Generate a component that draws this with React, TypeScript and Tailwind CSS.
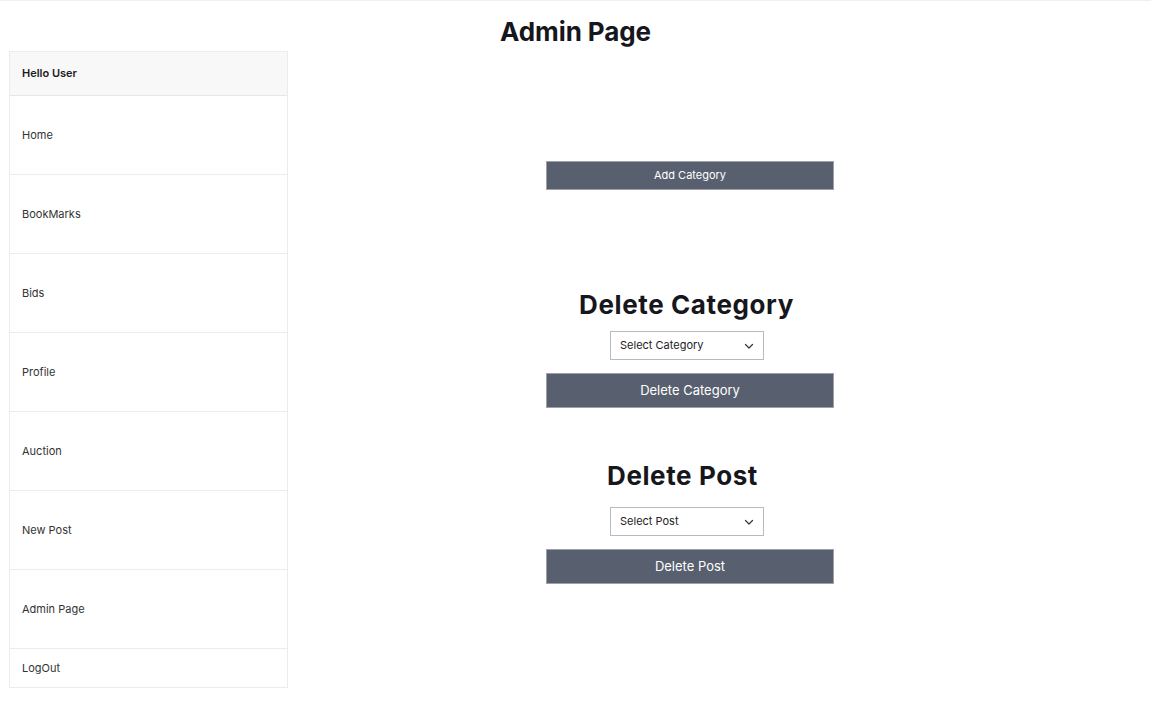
import React from "react";

const items = ["Home", "BookMarks", "Bids", "Profile", "Auction", "New Post", "Admin Page"];

function Chevron() {
  return (
    <svg width="10" height="10" viewBox="0 0 10 10" fill="none" stroke="#333" strokeWidth="1.2" strokeLinecap="round" strokeLinejoin="round">
      <path d="M1.5 3.5 L5 7 L8.5 3.5" />
    </svg>
  );
}

function Select({ label }: { label: string }) {
  return (
    <div className="ml-[64px] flex h-[29px] w-[154px] items-center justify-between border border-[#b9b9c3] bg-white pl-[9px] pr-[9px] text-[11px] text-[#222]">
      <span>{label}</span>
      <Chevron />
    </div>
  );
}

export default function App() {
  return (
    <div className="min-h-[717px] w-[1151px] bg-white text-[#222]" style={{ fontFamily: "Inter, 'Noto Sans', sans-serif" }}>
      <div className="h-px w-full bg-[#f0f0f2]" />
      <h1 className="pt-[15px] text-center text-[26px] font-bold leading-[31px] tracking-[-0.1px] text-[#16161d]">Admin Page</h1>
      <div className="mt-[4px] flex">
        <aside className="ml-[9px] w-[279px] border border-[#ebebf0]">
          <div className="flex h-[44px] items-center border-b border-[#e6e6ec] bg-[#f8f8f8] pl-[12px] text-[11px] font-semibold text-[#1b1b1f]">Hello User</div>
          {items.map((t) => (
            <div key={t} className="flex h-[79px] items-center border-b border-[#ebebf0] pl-[12px] text-[11px] text-[#333]">
              {t}
            </div>
          ))}
          <div className="flex h-[38px] items-center pl-[12px] text-[11px] text-[#333]">LogOut</div>
        </aside>
        <main className="flex-1 pl-[258px]">
          <div className="flex w-[288px] flex-col">
            <button className="mt-[110px] h-[29px] w-[288px] border border-[#9ea1aa] bg-[#585f6f] text-[11px] text-white">Add Category</button>
            <h2 className="mt-[99px] pr-[7px] text-center text-[26px] font-bold leading-[31px] tracking-[0.6px] text-[#16161d]">Delete Category</h2>
            <div className="mt-[11px]"><Select label="Select Category" /></div>
            <button className="mt-[13px] h-[35px] w-[288px] border border-[#9ea1aa] bg-[#585f6f] text-[13px] text-white">Delete Category</button>
            <h2 className="mt-[52px] pr-[15px] text-center text-[26px] font-bold leading-[31px] tracking-[0.6px] text-[#16161d]">Delete Post</h2>
            <div className="mt-[16px]"><Select label="Select Post" /></div>
            <button className="mt-[13px] h-[35px] w-[288px] border border-[#9ea1aa] bg-[#585f6f] text-[13px] text-white">Delete Post</button>
          </div>
        </main>
      </div>
    </div>
  );
}
